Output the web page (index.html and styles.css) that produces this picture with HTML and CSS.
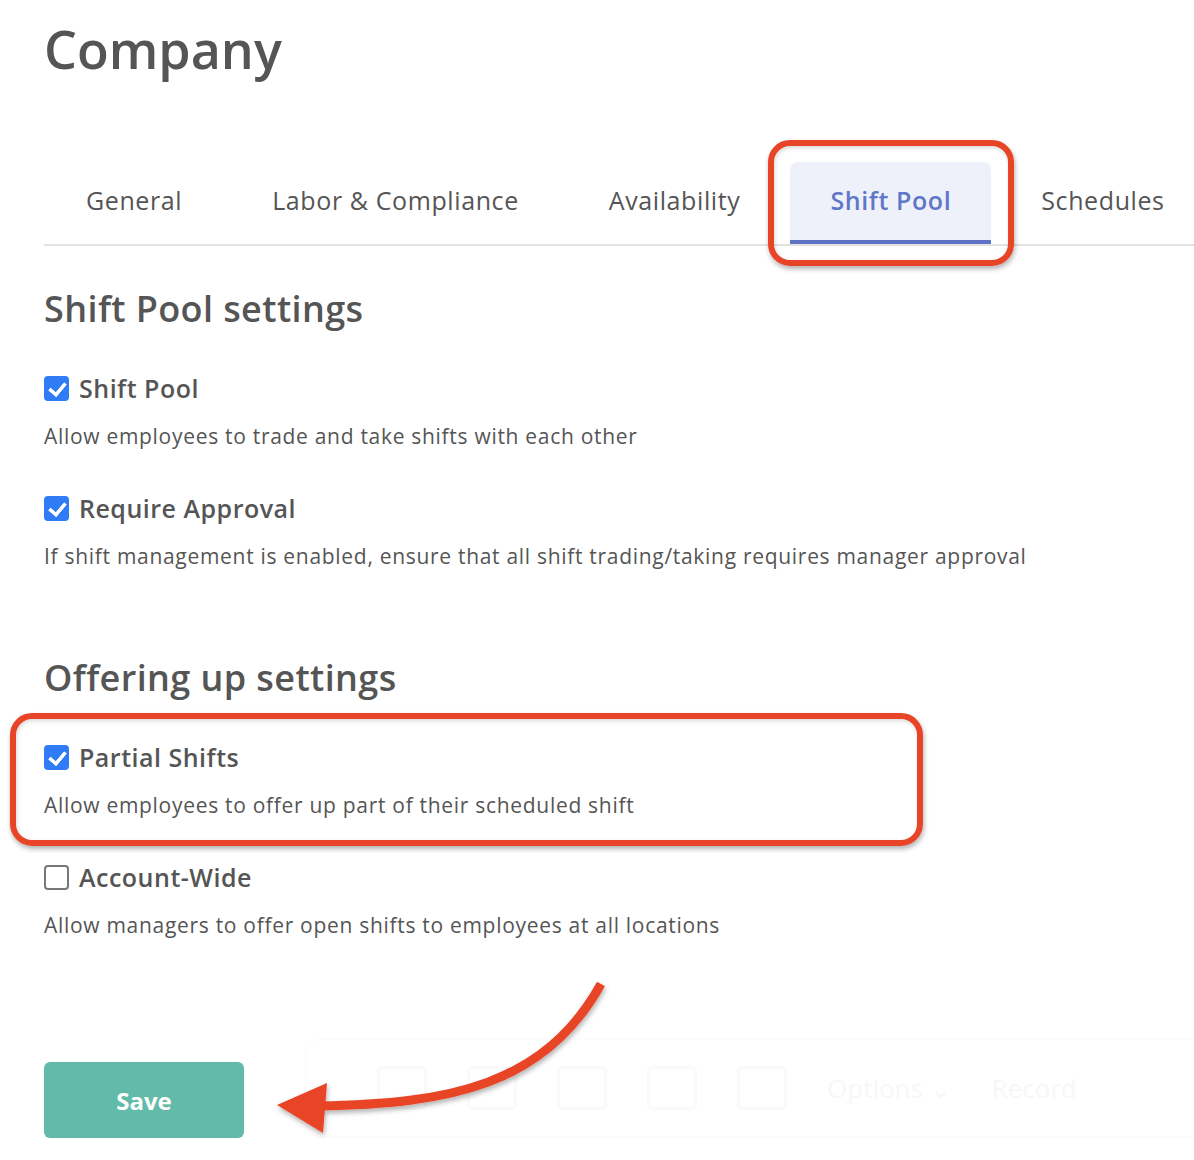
FILE: index.html
```html
<!DOCTYPE html>
<html>
<head>
<meta charset="utf-8">
<link rel="stylesheet" href="styles.css">
</head>
<body>
<div class="page">
  <h1 class="title">Company</h1>
  <nav class="tabs">
    <div class="tab">General</div>
    <div class="tab">Labor &amp; Compliance</div>
    <div class="tab">Availability</div>
    <div class="tab active">Shift Pool</div>
    <div class="tab">Schedules</div>
  </nav>

  <h2 class="section first">Shift Pool settings</h2>
  <div class="setting">
    <div class="label"><span class="cb checked"></span>Shift Pool</div>
    <p class="desc">Allow employees to trade and take shifts with each other</p>
  </div>
  <div class="setting">
    <div class="label"><span class="cb checked"></span>Require Approval</div>
    <p class="desc">If shift management is enabled, ensure that all shift trading/taking requires manager approval</p>
  </div>

  <h2 class="section second">Offering up settings</h2>
  <div class="setting">
    <div class="label"><span class="cb checked"></span>Partial Shifts</div>
    <p class="desc">Allow employees to offer up part of their scheduled shift</p>
  </div>
  <div class="setting">
    <div class="label"><span class="cb"></span>Account-Wide</div>
    <p class="desc">Allow managers to offer open shifts to employees at all locations</p>
  </div>

  <div class="actions">
    <button class="save">Save</button>
  </div>
</div>

<div class="ghost-bar">
  <span class="g g1"></span><span class="g g2"></span><span class="g g3"></span>
  <span class="g g4"></span><span class="g g5"></span>
  <span class="gt">Options ⌄</span><span class="gt">Record</span>
</div>

<div class="ring ring-tab"></div>
<div class="ring ring-partial"></div>

<svg class="arrow" width="1194" height="1160" viewBox="0 0 1194 1160">
  <defs>
    <filter id="sh" x="-20%" y="-20%" width="140%" height="140%">
      <feDropShadow dx="1" dy="3" stdDeviation="2.5" flood-color="#000" flood-opacity="0.3"/>
    </filter>
  </defs>
  <g filter="url(#sh)">
    <path d="M601 984 C 545 1085 450 1104 318 1106" fill="none" stroke="#e84428" stroke-width="9"/>
    <polygon points="277,1105 327,1083 323,1133" fill="#e84428"/>
  </g>
</svg>
</body>
</html>
```

FILE: styles.css
```css
* { box-sizing: border-box; }
html, body { margin: 0; padding: 0; background: #fff; }
body {
  font-family: "Open Sans", "Liberation Sans", sans-serif;
  color: #555;
  width: 1194px;
  height: 1160px;
  overflow: hidden;
  position: relative;
}
.page { padding: 0 0 0 44px; }

.title {
  margin: 0;
  padding-top: 14px;
  font-size: 52px;
  line-height: 70px;
  font-weight: 600;
  color: #555;
  letter-spacing: 0;
}

.tabs {
  display: flex;
  margin-top: 76px;
  border-bottom: 2px solid #e2e2e2;
  height: 86px;
  align-items: stretch;
}
.tab {
  flex: none;
  white-space: nowrap;
  padding: 0 40px;
  margin: 2px 5px 0;
  font-size: 25px;
  letter-spacing: 0.6px;
  line-height: 76px;
  color: #555;
  border-radius: 8px 8px 0 0;
  border-bottom: 4px solid transparent;
}
.tab:first-child { margin-left: 2px; }
.tab.active {
  background: #eef1fa;
  color: #5f77c6;
  font-weight: 600;
  letter-spacing: 0.6px;
  border-bottom-color: #5f73c4;
}

.section {
  margin: 0;
  font-size: 36px;
  letter-spacing: 0.4px;
  font-weight: 600;
  line-height: 44px;
  color: #555;
}
.section.first { margin-top: 41px; margin-bottom: 43px; }
.section.second { margin-top: 87px; margin-bottom: 43px; }

.setting { margin-bottom: 45px; }
.label {
  display: flex;
  align-items: center;
  gap: 10px;
  font-size: 25px;
  letter-spacing: 0.5px;
  font-weight: 600;
  line-height: 28px;
  color: #555;
}
.cb {
  width: 25px;
  height: 25px;
  border-radius: 4px;
  border: 2px solid #777;
  background: #fff;
  flex: none;
  position: relative;
}
.cb.checked {
  background: #2f7cf6;
  border-color: #2f7cf6;
}
.cb.checked::after {
  content: "";
  position: absolute;
  left: 6px;
  top: 1px;
  width: 7px;
  height: 13px;
  border: solid #fff;
  border-width: 0 4px 4px 0;
  border-radius: 1px;
  transform: rotate(40deg);
}
.desc {
  margin: 21px 0 0;
  font-size: 21px;
  letter-spacing: 0.7px;
  line-height: 26px;
  color: #555;
}

.actions { margin-top: 124px; }
.save {
  width: 200px;
  height: 76px;
  border: none;
  border-radius: 6px;
  background: #62bba8;
  color: #fff;
  font-family: "Open Sans", "Liberation Sans", sans-serif;
  font-size: 24px;
  font-weight: 700;
}

.ghost-bar {
  position: absolute;
  left: 305px;
  top: 1038px;
  width: 900px;
  height: 100px;
  border: 2px solid #fcfcfc;
  border-radius: 16px;
  display: flex;
  align-items: center;
  gap: 40px;
  padding-left: 70px;
}
.g { display: block; width: 50px; height: 44px; border: 3px solid #fafafa; border-radius: 6px; }
.gt { color: #f7f7f7; font-size: 26px; }

.ring {
  position: absolute;
  border: 6px solid #e84428;
  border-radius: 22px;
  box-shadow: 1px 3px 5px rgba(0,0,0,0.3), inset 1px 2px 4px rgba(0,0,0,0.15);
  pointer-events: none;
}
.ring-tab { left: 768px; top: 140px; width: 246px; height: 126px; }
.ring-partial { left: 10px; top: 713px; width: 913px; height: 133px; }

.arrow { position: absolute; left: 0; top: 0; pointer-events: none; }
```
